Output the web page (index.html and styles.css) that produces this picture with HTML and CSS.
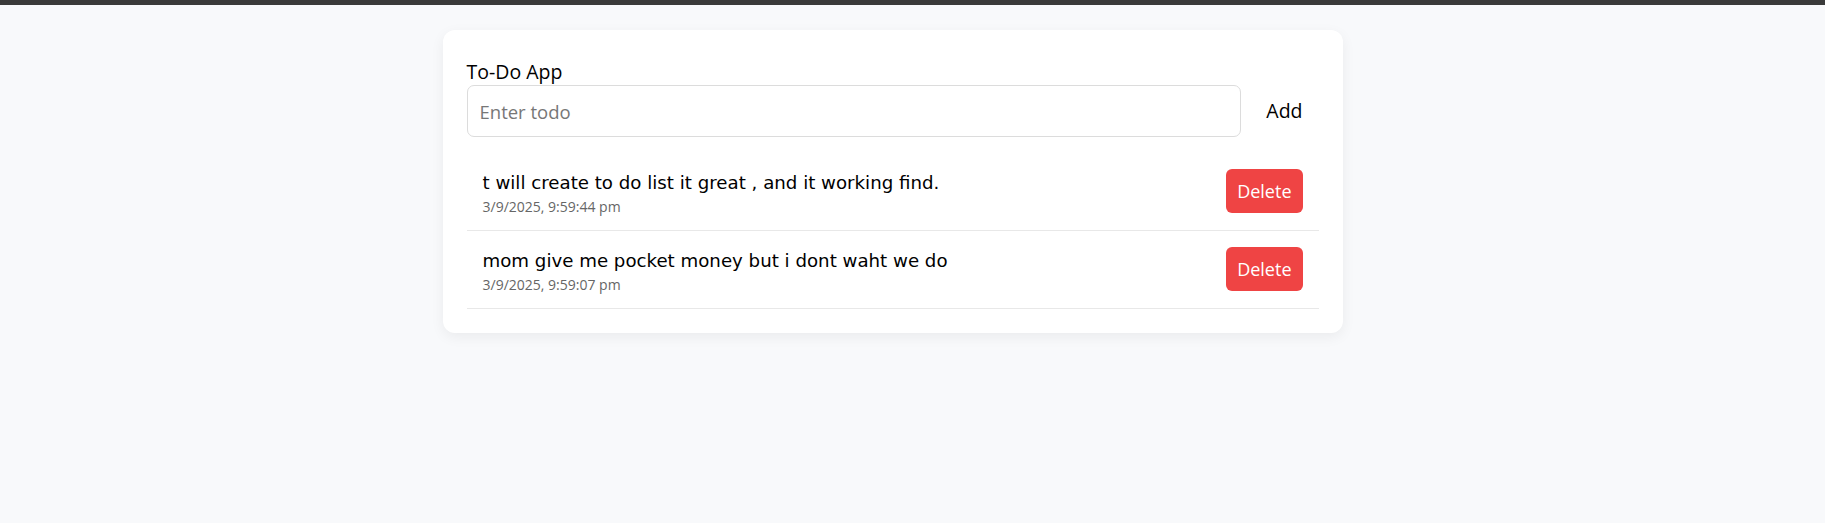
FILE: index.html
```html
<!DOCTYPE html>
<html lang="en">
<head>
<meta charset="utf-8">
<title>To-Do App</title>
<link rel="stylesheet" href="styles.css">
</head>
<body>
<div class="topbar"></div>
<main class="page">
  <section class="card">
    <h1 class="title">To-Do App</h1>
    <form class="form">
      <input class="input" type="text" placeholder="Enter todo">
      <button class="add" type="button">Add</button>
    </form>
    <ul class="list">
      <li class="item">
        <div class="item-body">
          <div class="item-text">t will create to do list it great , and it working find.</div>
          <div class="item-date">3/9/2025, 9:59:44 pm</div>
        </div>
        <button class="delete" type="button">Delete</button>
      </li>
      <li class="item">
        <div class="item-body">
          <div class="item-text">mom give me pocket money but i dont waht we do</div>
          <div class="item-date">3/9/2025, 9:59:07 pm</div>
        </div>
        <button class="delete" type="button">Delete</button>
      </li>
    </ul>
  </section>
</main>
</body>
</html>
```
FILE: styles.css
```css
* { box-sizing: border-box; }
html, body { margin: 0; padding: 0; }
body {
  background: #f8f9fb;
  font-family: "Open Sans", "Noto Sans", sans-serif;
  color: #000;
  min-height: 523px;
}
.topbar {
  height: 5px;
  background: #3a3a3a;
}
.page {
  padding: 25px 40px 0 0;
}
.card {
  width: 900px;
  margin: 0 auto;
  background: #fff;
  border-radius: 12px;
  box-shadow: 0 4px 14px rgba(0, 0, 0, 0.06);
  padding: 24px;
}
.title {
  margin: 0;
  padding-top: 4px;
  font-size: 19.5px;
  font-weight: 400;
  line-height: 27px;
}
.form {
  display: flex;
  align-items: center;
  gap: 9px;
  margin: 0;
}
.input {
  flex: 1;
  height: 52px;
  border: 1px solid #dcdcdc;
  border-radius: 7px;
  padding: 0 12px;
  font-family: inherit;
  font-size: 18.5px;
  color: #000;
  outline: none;
}
.input::placeholder { color: #777; }
.add {
  background: none;
  border: 0;
  padding: 8px 16px;
  font-family: inherit;
  font-size: 19.5px;
  line-height: 28px;
  color: #000;
}
.list {
  list-style: none;
  margin: 16px 0 0;
  padding: 0;
}
.item {
  display: flex;
  align-items: flex-start;
  justify-content: space-between;
  padding: 16px 16px 13px 16px;
  border-bottom: 1px solid #e8e8e8;
}
.item-text {
  font-family: "DejaVu Sans", sans-serif;
  font-size: 18.2px;
  line-height: 28px;
}
.item-date {
  font-size: 14px;
  line-height: 20px;
  color: #666;
}
.delete {
  background: #ef4444;
  color: #fff;
  border: 0;
  border-radius: 6px;
  padding: 8px 11px;
  font-family: inherit;
  font-size: 18px;
  line-height: 28px;
}
```
